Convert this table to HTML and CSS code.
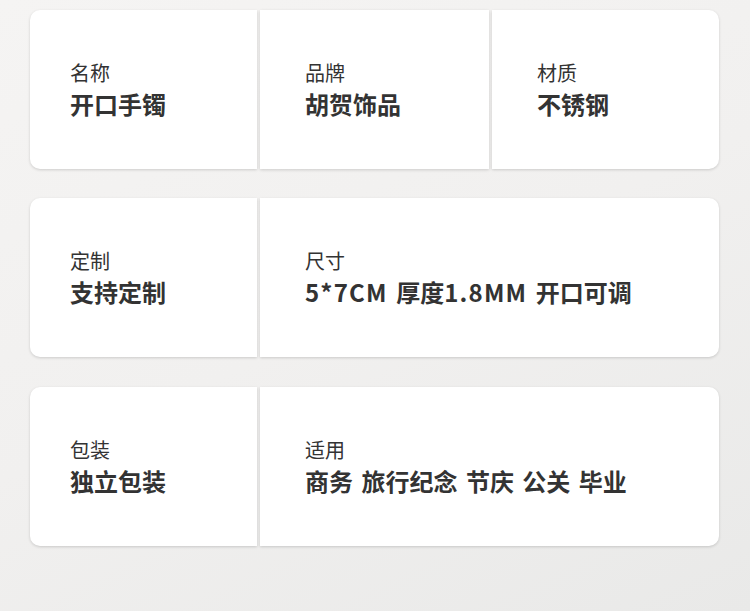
FILE: index.html
```html
<!DOCTYPE html>
<html lang="zh-CN">
<head>
<meta charset="utf-8">
<title>参数</title>
<link rel="stylesheet" href="styles.css">
</head>
<body>
<main class="specs">
  <section class="row row-three">
    <div class="cell cell-first">
      <div class="label">名称</div>
      <div class="value">开口手镯</div>
    </div>
    <div class="cell">
      <div class="label">品牌</div>
      <div class="value">胡贺饰品</div>
    </div>
    <div class="cell cell-last">
      <div class="label">材质</div>
      <div class="value">不锈钢</div>
    </div>
  </section>
  <section class="row row-two">
    <div class="cell cell-first">
      <div class="label">定制</div>
      <div class="value">支持定制</div>
    </div>
    <div class="cell cell-last">
      <div class="label">尺寸</div>
      <div class="value"><span class="latin">5*7CM</span> 厚度<span class="latin">1.8MM</span> 开口可调</div>
    </div>
  </section>
  <section class="row row-two row-last">
    <div class="cell cell-first">
      <div class="label">包装</div>
      <div class="value">独立包装</div>
    </div>
    <div class="cell cell-last">
      <div class="label">适用</div>
      <div class="value">商务 旅行纪念 节庆 公关 毕业</div>
    </div>
  </section>
</main>
</body>
</html>
```
FILE: styles.css
```css
html, body {
  margin: 0;
  padding: 0;
}
body {
  width: 750px;
  height: 611px;
  overflow: hidden;
  background: linear-gradient(155deg, #f5f4f3 0%, #f1f0ef 50%, #e9e9e8 100%);
  font-family: "Noto Sans CJK SC", "Noto Sans", sans-serif;
  color: #333;
}
.specs {
  display: flex;
  flex-direction: column;
  gap: 29px;
  padding: 10px 31px 0 30px;
}
.row {
  display: grid;
  height: 159px;
  column-gap: 3px;
}
.row-last {
  margin-top: 1px;
}
.row-three {
  grid-template-columns: 227px 229px 227px;
}
.row-two {
  grid-template-columns: 227px 459px;
}
.cell {
  background: #fff;
  box-shadow: 0 1px 3px rgba(0, 0, 0, 0.16);
  display: flex;
  flex-direction: column;
  justify-content: center;
  padding-left: 45px;
}
.cell-first {
  padding-left: 40px;
  border-radius: 10px 0 0 10px;
}
.cell-last {
  border-radius: 0 10px 10px 0;
}
.label {
  font-size: 20px;
  line-height: 28px;
  font-weight: 400;
  color: #333;
}
.value {
  font-size: 24px;
  line-height: 34px;
  font-weight: 700;
  color: #333;
  white-space: nowrap;
  word-spacing: 3px;
}
.latin {
  letter-spacing: 1.2px;
}
```
